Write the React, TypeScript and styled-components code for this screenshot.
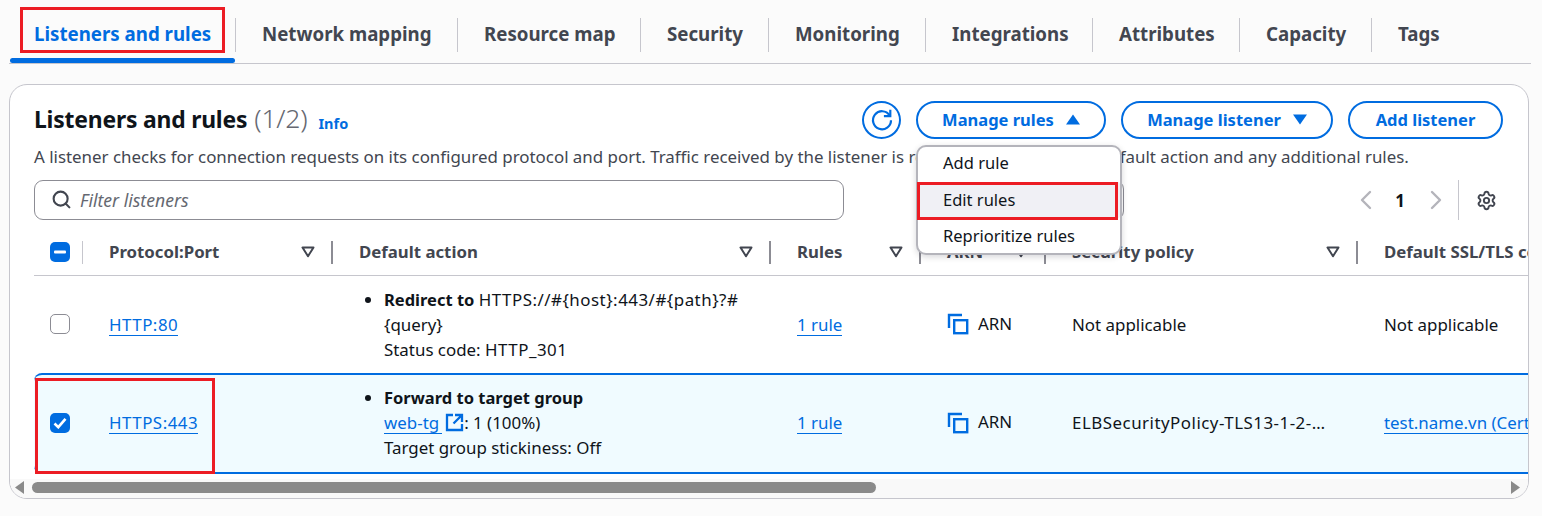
import React from 'react';
import styled, { createGlobalStyle } from 'styled-components';
import { ChevronLeft, ChevronRight, Search, Settings } from 'lucide-react';

const BLUE = '#006ce0';
const INK = '#0f141a';
const GREY = '#424650';

const GlobalStyle = createGlobalStyle`
  html, body { margin: 0; padding: 0; background: #fbfbfb; }
  body { font-family: "Noto Sans", "Open Sans", sans-serif; color: ${INK}; font-size: 16.9px; }
  * { box-sizing: border-box; }
`;

const Page = styled.div`
  width: 1542px;
  height: 516px;
  overflow: hidden;
  padding: 0 12px 0 9px;
`;

const Tabs = styled.div`
  display: grid;
  grid-template-columns: 227px 222px 183px 128px 157px 167px 147px 132px 1fr;
  height: 64px;
  border-bottom: 1px solid #c6c6cd;
  margin-right: -1px;
`;

const Tab = styled.div<{ $active?: boolean; $last?: boolean }>`
  position: relative;
  display: flex;
  align-items: center;
  padding: 9px 0 0 ${(p) => (p.$active ? '25px' : '26px')};
  font-size: 18.7px;
  font-weight: 700;
  color: ${(p) => (p.$active ? BLUE : GREY)};
  height: 58px;
  &::after {
    content: '';
    display: ${(p) => (p.$last ? 'none' : 'block')};
    position: absolute;
    right: 0;
    top: 18px;
    height: 34px;
    width: 1px;
    background: #c6c6cd;
  }
`;

const TabBar = styled.div`
  position: absolute;
  left: 1px;
  right: 1px;
  bottom: -5px;
  height: 5px;
  border-radius: 3px;
  background: ${BLUE};
`;

const RedMark = styled.div`
  position: absolute;
  border: 3px solid #ec1c24;
  pointer-events: none;
  z-index: 5;
`;

const TabMark = styled(RedMark)`
  left: 11px;
  top: 7px;
  width: 205px;
  height: 46px;
`;

const ItemMark = styled(RedMark)`
  left: -1px;
  top: 0;
  width: 201px;
  height: 38px;
`;

const RowMark = styled(RedMark)`
  left: 1px;
  top: 3px;
  width: 180px;
  height: 96px;
`;

const Card = styled.section`
  margin-top: 20px;
  height: 415px;
  width: 1520px;
  border: 1px solid #c6c6cd;
  border-radius: 18px;
  background: #fff;
  overflow: hidden;
  position: relative;
`;

const Head = styled.div`
  display: flex;
  align-items: center;
  padding: 16px 25px 0 24px;
  height: 54px;
`;

const Title = styled.h2`
  margin: -2px 0 0;
  font-size: 22.9px;
  line-height: 38px;
  font-weight: 700;
  color: ${INK};
  letter-spacing: -0.2px;
`;

const Count = styled.span`
  font-size: 26.5px;
  font-weight: 300;
  color: #656871;
  margin-left: 7px;
`;

const InfoLink = styled.span`
  font-size: 14.5px;
  font-weight: 700;
  color: ${BLUE};
  margin: 5px auto 0 11px;
`;

const RefreshBtn = styled.button`
  width: 39px;
  height: 38px;
  padding: 0;
  border-radius: 50%;
  border: 2px solid ${BLUE};
  background: #fff;
  display: flex;
  align-items: center;
  justify-content: center;
  color: ${BLUE};
  margin-right: 15px;
`;

const ActionWrap = styled.div<{ $w: number; $last?: boolean }>`
  position: relative;
  width: ${(p) => p.$w}px;
  margin-right: ${(p) => (p.$last ? 0 : 15)}px;
`;

const ActionBtn = styled.button`
  width: 100%;
  height: 38px;
  border-radius: 20px;
  border: 2px solid ${BLUE};
  background: #fff;
  color: ${BLUE};
  font-family: inherit;
  font-size: 16.5px;
  font-weight: 700;
  display: flex;
  align-items: center;
  justify-content: center;
  gap: 12px;
  padding: 0 0 1px;
`;

const Menu = styled.div`
  position: absolute;
  z-index: 4;
  left: 0;
  top: 44px;
  width: 206px;
  height: 110px;
  border: 2px solid #b4b4bb;
  border-radius: 10px;
  background: #fff;
  box-shadow: 0 2px 6px rgba(0, 7, 22, 0.16);
  display: flex;
  flex-direction: column;
`;

const MenuItem = styled.div<{ $hover?: boolean; $first?: boolean }>`
  position: relative;
  height: ${(p) => (p.$hover ? 37 : 35)}px;
  padding: 0 0 ${(p) => (p.$first ? 3 : p.$hover ? 2 : 0)}px 25px;
  display: flex;
  align-items: center;
  font-size: 16.5px;
  color: ${INK};
  background: ${(p) => (p.$hover ? '#f0f0f5' : 'transparent')};
  border-radius: 2px;
`;

const Description = styled.p`
  margin: 0;
  padding-left: 24px;
  height: 41px;
  line-height: 36px;
  font-size: 16.9px;
  color: ${GREY};
  white-space: nowrap;
`;

const Toolbar = styled.div`
  display: flex;
  align-items: flex-start;
  padding-left: 24px;
  height: 54px;
  position: relative;
`;

const FilterBox = styled.div`
  width: 810px;
  height: 40px;
  border: 1px solid #8c8c94;
  border-radius: 9px;
  display: flex;
  align-items: center;
  gap: 8px;
  padding: 0 0 1px 16px;
  color: #656871;
  font-size: 17.6px;
  font-style: italic;
`;

const HiddenSelect = styled.div`
  width: 205px;
  height: 40px;
  margin-left: 75px;
  border: 1px solid #8c8c94;
  border-radius: 9px;
`;

const Pager = styled.div`
  display: flex;
  align-items: center;
  margin-left: auto;
  padding-right: 31px;
  height: 40px;
  color: #b4b4bb;
`;

const PageNum = styled.span`
  font-size: 16.9px;
  font-weight: 700;
  color: ${INK};
  margin: 0 15px 0 13px;
`;

const PagerRule = styled.div`
  width: 1px;
  height: 40px;
  background: #c6c6cd;
  margin: 0 17px 0 6px;
`;

const GRID = '49px 250px 438px 150px 125px 312px 360px';

const HeadRow = styled.div`
  display: grid;
  grid-template-columns: ${GRID};
  margin-left: 24px;
  height: 42px;
  border-bottom: 1px solid #c6c6cd;
`;

const HeadCell = styled.div`
  display: flex;
  align-items: center;
  height: 36px;
  padding-left: 26px;
  font-size: 16.8px;
  font-weight: 700;
  color: ${GREY};
  white-space: nowrap;
  overflow: hidden;
`;

const HeadLabel = styled.span`
  flex: 1;
  margin-top: -2px;
`;

const HeadRule = styled.i`
  width: 2px;
  height: 23px;
  background: #8c8c94;
  margin-left: 16px;
  flex: none;
`;

const CheckCell = styled.div`
  display: flex;
  align-items: center;
  height: 36px;
`;

const CheckRule = styled.i`
  width: 2px;
  height: 23px;
  background: #c6c6cd;
  margin-left: 12px;
`;

const Check = styled.div<{ $on?: boolean }>`
  width: 20px;
  height: 20px;
  margin-left: 16px;
  flex: none;
  border-radius: 5px;
  display: flex;
  align-items: center;
  justify-content: center;
  background: ${(p) => (p.$on ? BLUE : '#fff')};
  border: ${(p) => (p.$on ? 'none' : '1.5px solid #8c8c94')};
`;

const Row = styled.div<{ $selected?: boolean }>`
  position: relative;
  display: grid;
  grid-template-columns: ${GRID};
  margin-left: 24px;
  height: ${(p) => (p.$selected ? 101 : 97)}px;
  padding-bottom: ${(p) => (p.$selected ? 2 : 1)}px;
  align-items: center;
  background: ${(p) => (p.$selected ? '#f0fbff' : '#fff')};
  border-top: ${(p) => (p.$selected ? `2px solid ${BLUE}` : 'none')};
  border-bottom: ${(p) => (p.$selected ? `2px solid ${BLUE}` : 'none')};
  border-radius: ${(p) => (p.$selected ? '8px 0 0 8px' : '0')};
  font-size: 16.9px;
  line-height: 25px;
  color: ${INK};
`;

const Cell = styled.div`
  padding-left: 26px;
  white-space: nowrap;
  overflow: hidden;
`;

const CheckBody = styled.div`
  display: flex;
  align-items: center;
`;

const TextLink = styled.span<{ $caps?: boolean; $tail?: boolean }>`
  color: ${BLUE};
  border-bottom: 1px solid ${BLUE};
  line-height: 20px;
  display: inline-block;
  letter-spacing: ${(p) => (p.$caps ? '0.5px' : '0')};
  padding-right: ${(p) => (p.$tail ? 3 : 0)}px;
`;

const Caps = styled.span`
  letter-spacing: 0.5px;
`;

const ActionBody = styled.div`
  padding-left: 25px;
  position: relative;
  white-space: normal;
  width: 410px;
  &::before {
    content: '';
    position: absolute;
    left: 6px;
    top: 10px;
    width: 6px;
    height: 6px;
    border-radius: 50%;
    background: ${INK};
  }
`;

const Strong = styled.b`
  font-weight: 700;
  font-size: 16.5px;
`;

const ArnCell = styled(Cell)`
  display: flex;
  align-items: center;
  gap: 9px;
`;

const ArnLabel = styled.span`
  margin-top: -2px;
`;

const ScrollBar = styled.div`
  position: absolute;
  left: 0;
  right: 0;
  bottom: 0;
  height: 19px;
  padding: 0 8px 2px 5px;
  background: #f9f9f9;
  display: flex;
  align-items: center;
  color: #8a8a8a;
`;

const ScrollThumb = styled.div`
  width: 844px;
  height: 11px;
  margin-left: 7px;
  border-radius: 6px;
  background: #8a8a8a;
`;

const ScrollRight = styled.div`
  margin-left: auto;
  display: flex;
`;

const SortIcon = () => (
  <svg width="14" height="12" viewBox="0 0 14 12" fill="none" style={{ flex: 'none' }}>
    <path d="M1.5 1.5h11L7 10.2z" stroke={GREY} strokeWidth="2" strokeLinejoin="round" />
  </svg>
);

const Caret = ({ up }: { up?: boolean }) => (
  <svg width="14" height="11" viewBox="0 0 14 11">
    <path d={up ? 'M7 0.5 14 10.5H0z' : 'M0 0.5h14L7 10.5z'} fill={BLUE} />
  </svg>
);

const RefreshIcon = () => (
  <svg width="24" height="24" viewBox="0 0 24 24" fill="none" stroke={BLUE} strokeWidth="2.2">
    <path d="M19.6 7.4A9 9 0 1 0 21 12.2" />
    <path d="M20.3 1.8v6.4h-6.4" strokeLinejoin="miter" />
  </svg>
);

const CopyIcon = () => (
  <svg width="22" height="22" viewBox="0 0 22 22" fill="none" stroke={BLUE} strokeWidth="2.4" style={{ flex: 'none' }}>
    <path d="M2 15V2h13" />
    <rect x="7.2" y="7.2" width="13" height="13" />
  </svg>
);

const ExternalIcon = () => (
  <svg width="19" height="19" viewBox="0 0 19 19" fill="none" stroke={BLUE} strokeWidth="2.3" style={{ verticalAlign: '-3px', margin: '0 0 0 3px' }}>
    <path d="M8 2H2v15h15v-6" />
    <path d="M10 2h7v7M17 2 8.5 10.5" />
  </svg>
);

const Dash = () => (
  <svg width="12" height="4" viewBox="0 0 12 4">
    <rect width="12" height="3" y="0.5" rx="1" fill="#fff" />
  </svg>
);

const Tick = () => (
  <svg width="14" height="12" viewBox="0 0 14 12" fill="none" stroke="#fff" strokeWidth="2.6">
    <path d="M1.5 6.5 5.3 10.2 12.5 1.8" />
  </svg>
);

const tabs = [
  'Listeners and rules',
  'Network mapping',
  'Resource map',
  'Security',
  'Monitoring',
  'Integrations',
  'Attributes',
  'Capacity',
  'Tags',
];

const columns = ['Protocol:Port', 'Default action', 'Rules', 'ARN', 'Security policy', 'Default SSL/TLS certificate'];

const App = () => (
  <Page>
    <GlobalStyle />
    <Tabs>
      {tabs.map((t, i) => (
        <Tab key={t} $active={i === 0} $last={i === tabs.length - 1}>
          {t}
          {i === 0 && <TabBar />}
          {i === 0 && <TabMark />}
        </Tab>
      ))}
    </Tabs>
    <Card>
      <Head>
        <Title>
          Listeners and rules<Count>(1/2)</Count>
        </Title>
        <InfoLink>Info</InfoLink>
        <RefreshBtn>
          <RefreshIcon />
        </RefreshBtn>
        <ActionWrap $w={190}>
          <ActionBtn>
            Manage rules <Caret up />
          </ActionBtn>
          <Menu>
            <MenuItem $first>Add rule</MenuItem>
            <MenuItem $hover>
              Edit rules
              <ItemMark />
            </MenuItem>
            <MenuItem>Reprioritize rules</MenuItem>
          </Menu>
        </ActionWrap>
        <ActionWrap $w={212}>
          <ActionBtn>
            Manage listener <Caret />
          </ActionBtn>
        </ActionWrap>
        <ActionWrap $w={155} $last>
          <ActionBtn>Add listener</ActionBtn>
        </ActionWrap>
      </Head>
      <Description>
        A listener checks for connection requests on its configured protocol and port. Traffic received by the listener
        is routed according to the default action and any additional rules.
      </Description>
      <Toolbar>
        <FilterBox>
          <Search size={21} strokeWidth={2.4} color="#424650" />
          Filter listeners
        </FilterBox>
        <HiddenSelect />
        <Pager>
          <ChevronLeft size={32} strokeWidth={1.8} />
          <PageNum>1</PageNum>
          <ChevronRight size={32} strokeWidth={1.8} />
          <PagerRule />
          <Settings size={21} strokeWidth={2.2} color="#424650" />
        </Pager>
      </Toolbar>
      <HeadRow>
        <CheckCell>
          <Check $on>
            <Dash />
          </Check>
          <CheckRule />
        </CheckCell>
        {columns.map((c, i) => (
          <HeadCell key={c}>
            <HeadLabel>{c}</HeadLabel>
            {i < columns.length - 1 && <SortIcon />}
            {i < columns.length - 1 && <HeadRule />}
          </HeadCell>
        ))}
      </HeadRow>
      <Row>
        <CheckBody>
          <Check />
        </CheckBody>
        <Cell>
          <TextLink $caps>HTTP:80</TextLink>
        </Cell>
        <Cell>
          <ActionBody>
            <Strong>Redirect to</Strong> <Caps>HTTPS://#{'{host}'}:443/#{'{path}'}?#</Caps>
            <br />
            {'{query}'}
            <br />
            Status code: <Caps>HTTP_301</Caps>
          </ActionBody>
        </Cell>
        <Cell>
          <TextLink>1 rule</TextLink>
        </Cell>
        <ArnCell>
          <CopyIcon />
          <ArnLabel>ARN</ArnLabel>
        </ArnCell>
        <Cell>Not applicable</Cell>
        <Cell>Not applicable</Cell>
      </Row>
      <Row $selected>
        <RowMark />
        <CheckBody>
          <Check $on>
            <Tick />
          </Check>
        </CheckBody>
        <Cell>
          <TextLink $caps>HTTPS:443</TextLink>
        </Cell>
        <Cell>
          <ActionBody>
            <Strong>Forward to target group</Strong>
            <br />
            <TextLink $tail>web-tg</TextLink>
            <ExternalIcon />: 1 (100%)
            <br />
            Target group stickiness: Off
          </ActionBody>
        </Cell>
        <Cell>
          <TextLink>1 rule</TextLink>
        </Cell>
        <ArnCell>
          <CopyIcon />
          <ArnLabel>ARN</ArnLabel>
        </ArnCell>
        <Cell>
          <Caps>ELBSecurityPolicy-TLS13-1-2-…</Caps>
        </Cell>
        <Cell>
          <TextLink>test.name.vn (Certificate ID)</TextLink>
        </Cell>
      </Row>
      <ScrollBar>
        <svg width="10" height="13" viewBox="0 0 10 13">
          <path d="M9 0v13L0 6.5z" fill="#8a8a8a" />
        </svg>
        <ScrollThumb />
        <ScrollRight>
          <svg width="10" height="13" viewBox="0 0 10 13">
            <path d="M1 0v13l9-6.5z" fill="#8a8a8a" />
          </svg>
        </ScrollRight>
      </ScrollBar>
    </Card>
  </Page>
);

export default App;
